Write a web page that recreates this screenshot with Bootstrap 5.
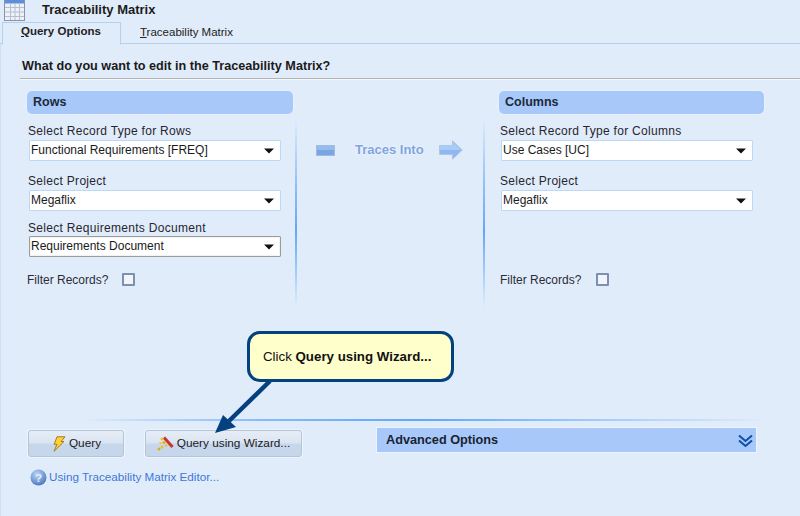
<!DOCTYPE html>
<html lang="en">
<head>
<meta charset="utf-8">
<title>Traceability Matrix</title>
<link href="https://cdn.jsdelivr.net/npm/bootstrap@5.3.0/dist/css/bootstrap.min.css" rel="stylesheet">
<style>
html,body{height:516px;overflow:hidden}
body{background:#e1ecfb;color:#222;font-family:"Liberation Sans",Arial,sans-serif;font-size:12px;line-height:1.2}
.app-shell{position:relative;width:800px;height:516px;overflow:hidden}
.title-bar{height:22px;padding-left:4px;gap:16px}
.title-text{font-size:13px;font-weight:700;color:#1c1c1c;margin:2px 0 0;line-height:16px}
.tab-strip.nav-tabs{height:22px;padding-left:2px;border-bottom:1px solid #b5d0ee;gap:0;--bs-nav-tabs-border-width:0}
.tab-strip .nav-link{height:22px;border-radius:0;padding:3px 0 0 19px;font-size:12px;color:#222;margin:0;border:0;background:transparent}
.tab-strip .nav-link.active{width:119px;background:#e1ecfb;font-size:11.5px;font-weight:700;color:#222;border:1px solid #b5d0ee;border-bottom:1px solid #e1ecfb;height:23px;padding-top:2px;padding-left:18px}
.tab-strip .tab-plain{font-size:11.5px;padding-top:4px}
.pane-body{border-left:1px solid #cfdff5;padding:14px 0 0 19px;flex:1;display:flex;flex-direction:column}
.pane-heading{font-size:12.65px;font-weight:700;color:#1a1a1a;margin:0;padding:0 0 4px 2px;border-bottom:1px solid #b4b4b4;line-height:16px;box-shadow:0 1px 0 #f4f8fe}
.select-area{padding-left:7px;margin-top:12px;height:214px}
.select-col{width:266px;height:214px}
.select-col-b{width:265px;margin-left:14px}
.col-head{background:#a8c8fa;border-radius:5px;height:23px;font-size:12.5px;font-weight:700;color:#1a2a3a;padding:3px 0 0 6px;line-height:16px;box-shadow:0 0 0 1px #e9f1fc}
.field-label{font-size:12px;letter-spacing:.3px;line-height:16px;margin:0 0 1px;padding-left:1px;color:#26262e}
.field-first{margin-top:9px;margin-bottom:1px}
.field-next{margin-top:12px}
.field-tight{margin-top:9px;margin-bottom:0}
.pick.form-select{width:252px;height:21px;margin-left:2px;padding:0 0 0 1px;font-size:12px;line-height:19px;color:#1a1a1a;border:1px solid #bcd8f5;border-radius:1px;background-color:#fff;font-family:"Liberation Sans",Arial,sans-serif;box-shadow:none;background-size:12px 8px;background-position:right 5px center;background-image:url("data:image/svg+xml,%3Csvg xmlns='http://www.w3.org/2000/svg' viewBox='0 0 12 8'%3E%3Cpath d='M1 1.500h10L6 6.500z' fill='%23111'/%3E%3C/svg%3E")}
.pick-focus.form-select{border:1px solid #9c9c9c;box-shadow:inset 0 0 0 1px #f2f2f2}
.filter-row{margin-top:auto;margin-bottom:18px;gap:14px;padding-left:0;font-size:12px;color:#2c2c36}
.select-col-b .filter-row{gap:15px;padding-left:1px}
.filter-check.form-check-input{width:13px;height:13px;margin:0;border:2px solid #7d90b0;border-radius:1px;background-color:#f1f5fb}
.col-rule{width:2px;height:190px;margin:27px 0 0 2px;background:linear-gradient(180deg,transparent 0,#8fc0f8 35%,#62a8f6 60%,transparent 100%)}
.flow-mid{width:184px;height:24px;margin-top:47px;font-size:13px;font-weight:700;color:#7fa5dc;text-shadow:0 0 2px #fff;padding-left:19px}
.flow-label{margin-left:20px;margin-right:15px}
.fade-rule{height:2px;background:linear-gradient(90deg,transparent 60px,#84bcf9 240px,#5fa9f8 400px,transparent 750px);margin-top:114px}
.bottom-row{margin-top:9px;padding-left:8px;align-items:flex-start}
.act-btn.btn{height:27px;padding:0;font-size:11.8px;color:#1b1b1b;border:1px solid #b4c5da;border-radius:3px;background:linear-gradient(180deg,#e6edf7 0,#dbe5f2 45%,#c6d6eb 55%,#c6d6eb 100%);gap:3px;box-shadow:0 0 0 1px #eef4fc}
.btn-query{width:96px}
.btn-wizard{width:157px;margin-left:21px}
.adv-bar{width:379px;height:24px;margin-left:75px;margin-top:-2px;background:#a8c8fa;font-size:12.7px;font-weight:700;color:#1a2333;padding:2px 3px 0 9px;box-shadow:0 0 0 1px #edf4fd}
.help-row{margin:12px 0 0 10px;gap:2px}
.help-link{color:#3c79d6;font-size:11.7px;text-decoration:none}
.tip-bubble{position:absolute;left:247px;top:331px;width:207px;height:51px;background:#ffffcc;border:3px solid #04417f;border-radius:13px;padding-left:13px;font-size:13.3px;color:#111;line-height:45px;white-space:nowrap}
.tip-arrow{position:absolute;left:205px;top:375px}
</style>
</head>
<body>
<div class="app-shell d-flex flex-column">
  <div class="title-bar d-flex align-items-start">
    <svg width="22" height="22" viewBox="0 0 22 22"><rect x=".5" y="-1" width="20" height="21.500" fill="#eef1f8" stroke="#8495ad"/><rect x="1" y="0" width="19" height="3.500" fill="#5f8fd8"/><path d="M1 7.500h19M1 12h19M1 16.500h19M6.500 3v17M11 3v17M15.500 3v17" stroke="#b5bfce" fill="none"/></svg>
    <h1 class="title-text">Traceability Matrix</h1>
  </div>
  <ul class="nav nav-tabs tab-strip">
    <li class="nav-item"><a class="nav-link active" href="#"><u>Q</u>uery Options</a></li>
    <li class="nav-item"><a class="nav-link tab-plain" href="#"><u>T</u>raceability Matrix</a></li>
  </ul>
  <div class="pane-body">
    <h2 class="pane-heading">What do you want to edit in the Traceability Matrix?</h2>
    <div class="select-area d-flex align-items-start">
      <div class="select-col d-flex flex-column">
        <div class="col-head">Rows</div>
        <p class="field-label field-first">Select Record Type for Rows</p>
        <select class="form-select pick"><option>Functional Requirements [FREQ]</option></select>
        <p class="field-label field-next">Select Project</p>
        <select class="form-select pick"><option>Megaflix</option></select>
        <p class="field-label field-tight">Select Requirements Document</p>
        <select class="form-select pick pick-focus"><option>Requirements Document</option></select>
        <div class="filter-row d-flex align-items-center"><span>Filter Records?</span><input class="form-check-input filter-check" type="checkbox" aria-label="Filter Records"></div>
      </div>
      <div class="col-rule"></div>
      <div class="flow-mid d-flex align-items-center">
        <svg width="19" height="11" viewBox="0 0 19 11"><rect x=".5" y=".5" width="18" height="10" fill="#7aa5e4" stroke="#a4bad6"/><rect x="1" y="1" width="17" height="4" fill="#94bcf0"/></svg>
        <span class="flow-label">Traces Into</span>
        <svg width="24" height="20" viewBox="0 0 24 20"><path d="M.5 5.500h13V.8L23.300 10l-9.800 9.200v-4.700H.500z" fill="#8db8f0" stroke="#b1c6e2"/><path d="M1 6h13V2l8 8H1z" fill="#a7ccf7"/></svg>
      </div>
      <div class="col-rule"></div>
      <div class="select-col select-col-b d-flex flex-column">
        <div class="col-head">Columns</div>
        <p class="field-label field-first">Select Record Type for Columns</p>
        <select class="form-select pick"><option>Use Cases [UC]</option></select>
        <p class="field-label field-next">Select Project</p>
        <select class="form-select pick"><option>Megaflix</option></select>
        <div class="filter-row d-flex align-items-center"><span>Filter Records?</span><input class="form-check-input filter-check" type="checkbox" aria-label="Filter Records"></div>
      </div>
    </div>
    <div class="fade-rule"></div>
    <div class="bottom-row d-flex">
      <button type="button" class="btn act-btn btn-query d-flex align-items-center justify-content-center">
        <svg width="15" height="16" viewBox="0 0 15 16"><path d="M6 .8h8L10 5.500h3L3 15.300l3-7H3.200z" fill="#ffd23c" stroke="#a87d18"/></svg>
        <span>Query</span>
      </button>
      <button type="button" class="btn act-btn btn-wizard d-flex align-items-center justify-content-center">
        <svg width="17" height="15" viewBox="0 0 17 15"><path d="M7 1.500l8.500 9.500" stroke="#c9352c" stroke-width="3"/><circle cx="5" cy="3" r="1.500" fill="#e9c02e"/><circle cx="7" cy="6.500" r="1.500" fill="#dcae22"/><circle cx="3.500" cy="7" r="1.300" fill="#f0cc44"/><circle cx="9" cy="9.500" r="1.300" fill="#e9c02e"/><circle cx="5" cy="11" r="1.500" fill="#e9c02e"/><circle cx="2" cy="13" r="1.500" fill="#dcae22"/></svg>
        <span>Query using Wizard...</span>
      </button>
      <div class="adv-bar d-flex align-items-center justify-content-between">
        <span>Advanced Options</span>
        <svg width="15" height="14" viewBox="0 0 15 14"><path d="M1 1.500l6.500 5.500L14 1.500M1 6.500l6.500 5.500L14 6.500" fill="none" stroke="#0f4fa8" stroke-width="2"/></svg>
      </div>
    </div>
    <div class="help-row d-flex align-items-center">
      <svg width="17" height="17" viewBox="0 0 17 17"><defs><radialGradient id="hg" cx=".4" cy=".3" r=".8"><stop offset="0" stop-color="#bcd6f6"/><stop offset="1" stop-color="#3d6fb8"/></radialGradient></defs><circle cx="8.500" cy="8.500" r="8" fill="url(#hg)"/><text x="8.500" y="12.500" text-anchor="middle" font-family="Liberation Sans" font-weight="700" font-size="11" fill="#e8f0fb">?</text></svg>
      <a class="help-link" href="#">Using Traceability Matrix Editor...</a>
    </div>
  </div>
  <div class="tip-bubble">Click <b>Query using Wizard...</b></div>
  <svg class="tip-arrow" width="80" height="62" viewBox="0 0 80 62"><path d="M65 6L24 46" stroke="#04417f" stroke-width="4.500" fill="none"/><path d="M10 58L18 40 31 52z" fill="#04417f"/></svg>
</div>
<script src="https://cdn.jsdelivr.net/npm/bootstrap@5.3.0/dist/js/bootstrap.bundle.min.js"></script>
</body>
</html>
